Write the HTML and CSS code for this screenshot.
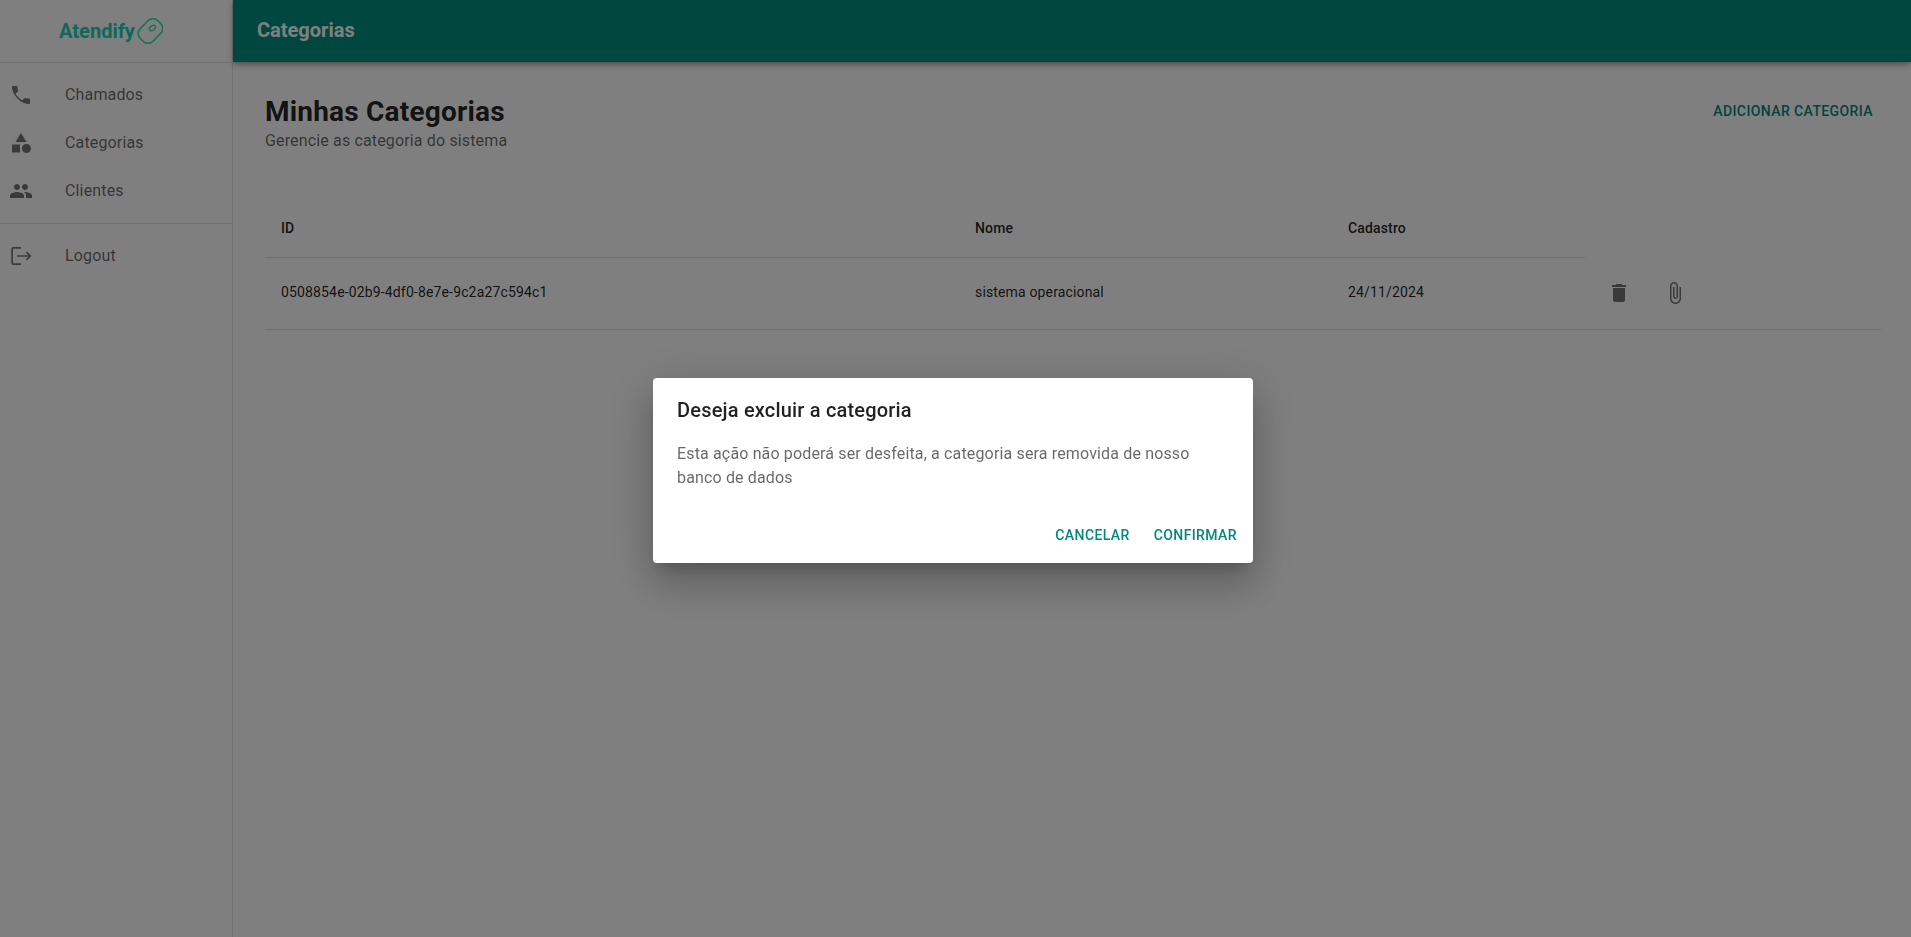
FILE: index.html
```html
<!DOCTYPE html>
<html>

<head>
  <meta charset="utf-8">
  <title>Atendify - Categorias</title>
  <link rel="stylesheet" href="styles.css">
</head>

<body>
  <div class="app">
    <aside class="sidebar">
      <div class="brand">
        <span class="brand-name">Atendify</span>
        <svg class="brand-tag" viewBox="0 0 26 26" width="26" height="26">
          <rect x="-12.500" y="-9" width="25" height="18" rx="7" transform="translate(13.500 13) rotate(-45)" fill="none" stroke="#30e8a8" stroke-width="1.700" />
          <ellipse cx="15.500" cy="10" rx="3.400" ry="2.200" transform="rotate(-35 15.500 10)" fill="none" stroke="#30e8a8" stroke-width="1.500" />
        </svg>
      </div>
      <ul class="nav-list">
        <li class="nav-item">
          <svg class="nav-icon" viewBox="0 0 24 24"><path d="M6.62 10.79c1.44 2.83 3.76 5.14 6.59 6.59l2.2-2.2c.27-.27.67-.36 1.02-.24 1.12.37 2.33.57 3.57.57.55 0 1 .45 1 1V20c0 .55-.45 1-1 1-1 0-1.6-.1-2.5-.3C11.200 19.500 4.800 13 3.300 6.500 3.100 5.600 3 5 3 4c0-.55.45-1 1-1h3.500c.55 0 1 .45 1 1 0 1.250.2 2.450.57 3.570.11.35.03.74-.25 1.020l-2.200 2.200z" /></svg>
          <span>Chamados</span>
        </li>
        <li class="nav-item">
          <svg class="nav-icon" viewBox="0 0 24 24"><path d="M12 2l-5.500 9h11z" /><circle cx="17.500" cy="17.500" r="4.500" /><path d="M3 13.500h8v8H3z" /></svg>
          <span>Categorias</span>
        </li>
        <li class="nav-item">
          <svg class="nav-icon" viewBox="0 0 24 24"><path d="M16 11c1.660 0 2.990-1.340 2.990-3S17.660 5 16 5c-1.660 0-3 1.340-3 3s1.340 3 3 3zm-8 0c1.660 0 2.990-1.340 2.990-3S9.660 5 8 5C6.340 5 5 6.340 5 8s1.340 3 3 3zm0 2c-2.330 0-7 1.170-7 3.500V19h14v-2.500c0-2.330-4.670-3.500-7-3.500zm8 0c-.29 0-.62.02-.97.05 1.160.84 1.970 1.970 1.970 3.450V19h6v-2.500c0-2.330-4.670-3.500-7-3.500z" /></svg>
          <span>Clientes</span>
        </li>
      </ul>
      <ul class="nav-list nav-bottom">
        <li class="nav-item">
          <svg class="nav-icon nav-icon-line" viewBox="0 0 24 24"><path d="M12 3.800H4.500c-.8 0-1.400.6-1.400 1.400v13.600c0 .8.6 1.400 1.400 1.400H12M8 12h13M17.300 8l4 4-4 4" /></svg>
          <span>Logout</span>
        </li>
      </ul>
    </aside>

    <div class="content">
      <header class="topbar">Categorias</header>
      <main class="page">
        <div class="page-head">
          <div>
            <h1>Minhas Categorias</h1>
            <p class="subtitle">Gerencie as categoria do sistema</p>
          </div>
          <button class="add-btn">Adicionar categoria</button>
        </div>

        <table class="data-table">
          <colgroup>
            <col class="col-id">
            <col class="col-name">
            <col class="col-date">
            <col class="col-del">
            <col>
          </colgroup>
          <thead>
            <tr>
              <th>ID</th>
              <th>Nome</th>
              <th>Cadastro</th>
            </tr>
          </thead>
          <tbody>
            <tr>
              <td>0508854e-02b9-4df0-8e7e-9c2a27c594c1</td>
              <td>sistema operacional</td>
              <td>24/11/2024</td>
              <td class="icon-cell">
                <svg class="row-icon" viewBox="0 0 24 24"><path d="M6 19c0 1.100.9 2 2 2h8c1.100 0 2-.9 2-2V7H6v12zM19 4h-3.500l-1-1h-5l-1 1H5v2h14V4z" /></svg>
              </td>
              <td class="icon-cell">
                <svg class="row-icon" viewBox="0 0 24 24"><path d="M16.500 6v11.500c0 2.210-1.790 4-4 4s-4-1.790-4-4V5c0-1.380 1.120-2.500 2.500-2.500s2.500 1.120 2.500 2.500v10.500c0 .55-.45 1-1 1s-1-.45-1-1V6H10v9.500c0 1.380 1.120 2.500 2.500 2.500s2.500-1.120 2.500-2.500V5c0-2.210-1.790-4-4-4S7 2.790 7 5v12.500c0 3.040 2.460 5.500 5.500 5.500s5.500-2.460 5.500-5.500V6h-1.500z" /></svg>
              </td>
            </tr>
          </tbody>
        </table>
      </main>
    </div>
  </div>

  <div class="backdrop">
    <div class="dialog">
      <h2>Deseja excluir a categoria</h2>
      <p>Esta ação não poderá ser desfeita, a categoria sera removida de nosso banco de dados</p>
      <div class="dialog-actions">
        <button>Cancelar</button>
        <button>Confirmar</button>
      </div>
    </div>
  </div>
</body>

</html>
```

FILE: styles.css
```css
* {
  box-sizing: border-box;
}

html,
body {
  height: 100%;
}

body {
  margin: 0;
  background-color: #fff;
  font-family: Roboto, "Liberation Sans", sans-serif;
  color: rgba(0, 0, 0, 0.87);
  overflow: hidden;
}

.app {
  display: flex;
  height: 100%;
}

.sidebar {
  width: 233px;
  flex-shrink: 0;
  border-right: 1px solid rgba(0, 0, 0, 0.12);
}

.brand {
  height: 63px;
  border-bottom: 1px solid rgba(0, 0, 0, 0.12);
  display: flex;
  align-items: center;
  justify-content: center;
  padding-right: 10px;
  gap: 2px;
}

.brand-name {
  font-size: 20px;
  font-weight: 700;
  color: #20d0bb;
}

.brand-tag {
  display: block;
}

.nav-list {
  list-style: none;
  margin: 0;
  padding: 8px 0;
}

.nav-bottom {
  border-top: 1px solid rgba(0, 0, 0, 0.12);
}

.nav-item {
  display: flex;
  align-items: center;
  height: 48px;
  padding-left: 9px;
  font-size: 16px;
  letter-spacing: 0.15px;
  color: rgba(0, 0, 0, 0.6);
}

.nav-item span {
  margin-bottom: 2px;
}

.nav-icon {
  width: 24px;
  height: 24px;
  margin-right: 32px;
  fill: rgba(0, 0, 0, 0.54);
  flex-shrink: 0;
}

.nav-icon-line {
  fill: none;
  stroke: rgba(0, 0, 0, 0.54);
  stroke-width: 1.7;
}

.content {
  flex: 1;
  min-width: 0;
}

.topbar {
  height: 62px;
  background-color: #008e80;
  color: #fff;
  font-size: 20px;
  font-weight: 700;
  line-height: 60px;
  padding-left: 24px;
  box-shadow: 0 2px 4px -1px rgba(0, 0, 0, 0.2), 0 4px 5px 0 rgba(0, 0, 0, 0.14), 0 1px 10px 0 rgba(0, 0, 0, 0.12);
}

.page {
  padding: 33px 30px 0 32px;
}

.page-head {
  display: flex;
  justify-content: space-between;
  align-items: flex-start;
}

h1 {
  margin: 0;
  font-size: 28px;
  line-height: 34px;
  font-weight: 700;
  letter-spacing: 0.2px;
}

.subtitle {
  margin: 0;
  font-size: 16px;
  line-height: 24px;
  letter-spacing: 0.15px;
  color: rgba(0, 0, 0, 0.6);
}

.add-btn {
  border: none;
  background: none;
  font-family: inherit;
  font-size: 14px;
  font-weight: 500;
  line-height: 24px;
  letter-spacing: 0.4px;
  text-transform: uppercase;
  color: #00897b;
  padding: 4px 8px;
}

.data-table {
  width: 100%;
  margin-top: 47px;
  border-collapse: collapse;
  table-layout: fixed;
  font-size: 14px;
  letter-spacing: 0.15px;
}

.col-id {
  width: 694px;
}

.col-name {
  width: 373px;
}

.col-date {
  width: 253px;
}

.col-del {
  width: 56px;
}

.data-table th {
  text-align: left;
  font-weight: 500;
  line-height: 24px;
  padding: 16px 16px 17px;
  border-bottom: 1px solid rgba(0, 0, 0, 0.12);
}

.data-table td {
  height: 72px;
  padding: 0 16px 3px;
  border-bottom: 1px solid rgba(0, 0, 0, 0.12);
}

.data-table td.icon-cell {
  padding: 0 0 0 22px;
}

.row-icon {
  display: block;
  width: 24px;
  height: 24px;
  fill: rgba(0, 0, 0, 0.54);
}

.backdrop {
  position: fixed;
  top: 0;
  right: 0;
  bottom: 0;
  left: 0;
  display: flex;
  align-items: center;
  justify-content: center;
  padding: 4px 5px 0 0;
  background-color: rgba(0, 0, 0, 0.5);
}

.dialog {
  width: 600px;
  background-color: #fff;
  border-radius: 4px;
  box-shadow: 0 11px 15px -7px rgba(0, 0, 0, 0.2), 0 24px 38px 3px rgba(0, 0, 0, 0.14), 0 9px 46px 8px rgba(0, 0, 0, 0.12);
}

.dialog h2 {
  margin: 0;
  padding: 16px 24px;
  font-size: 20px;
  line-height: 32px;
  font-weight: 500;
  letter-spacing: 0.19px;
}

.dialog p {
  margin: 0;
  padding: 0 24px 20px;
  font-size: 16px;
  line-height: 24px;
  letter-spacing: 0.15px;
  color: rgba(0, 0, 0, 0.6);
}

.dialog-actions {
  display: flex;
  justify-content: flex-end;
  gap: 8px;
  padding: 7px 8px 10px;
}

.dialog-actions button {
  border: none;
  background: none;
  font-family: inherit;
  font-size: 14px;
  font-weight: 500;
  line-height: 24px;
  letter-spacing: 0.4px;
  text-transform: uppercase;
  color: #00897b;
  padding: 6px 8px;
}
```
